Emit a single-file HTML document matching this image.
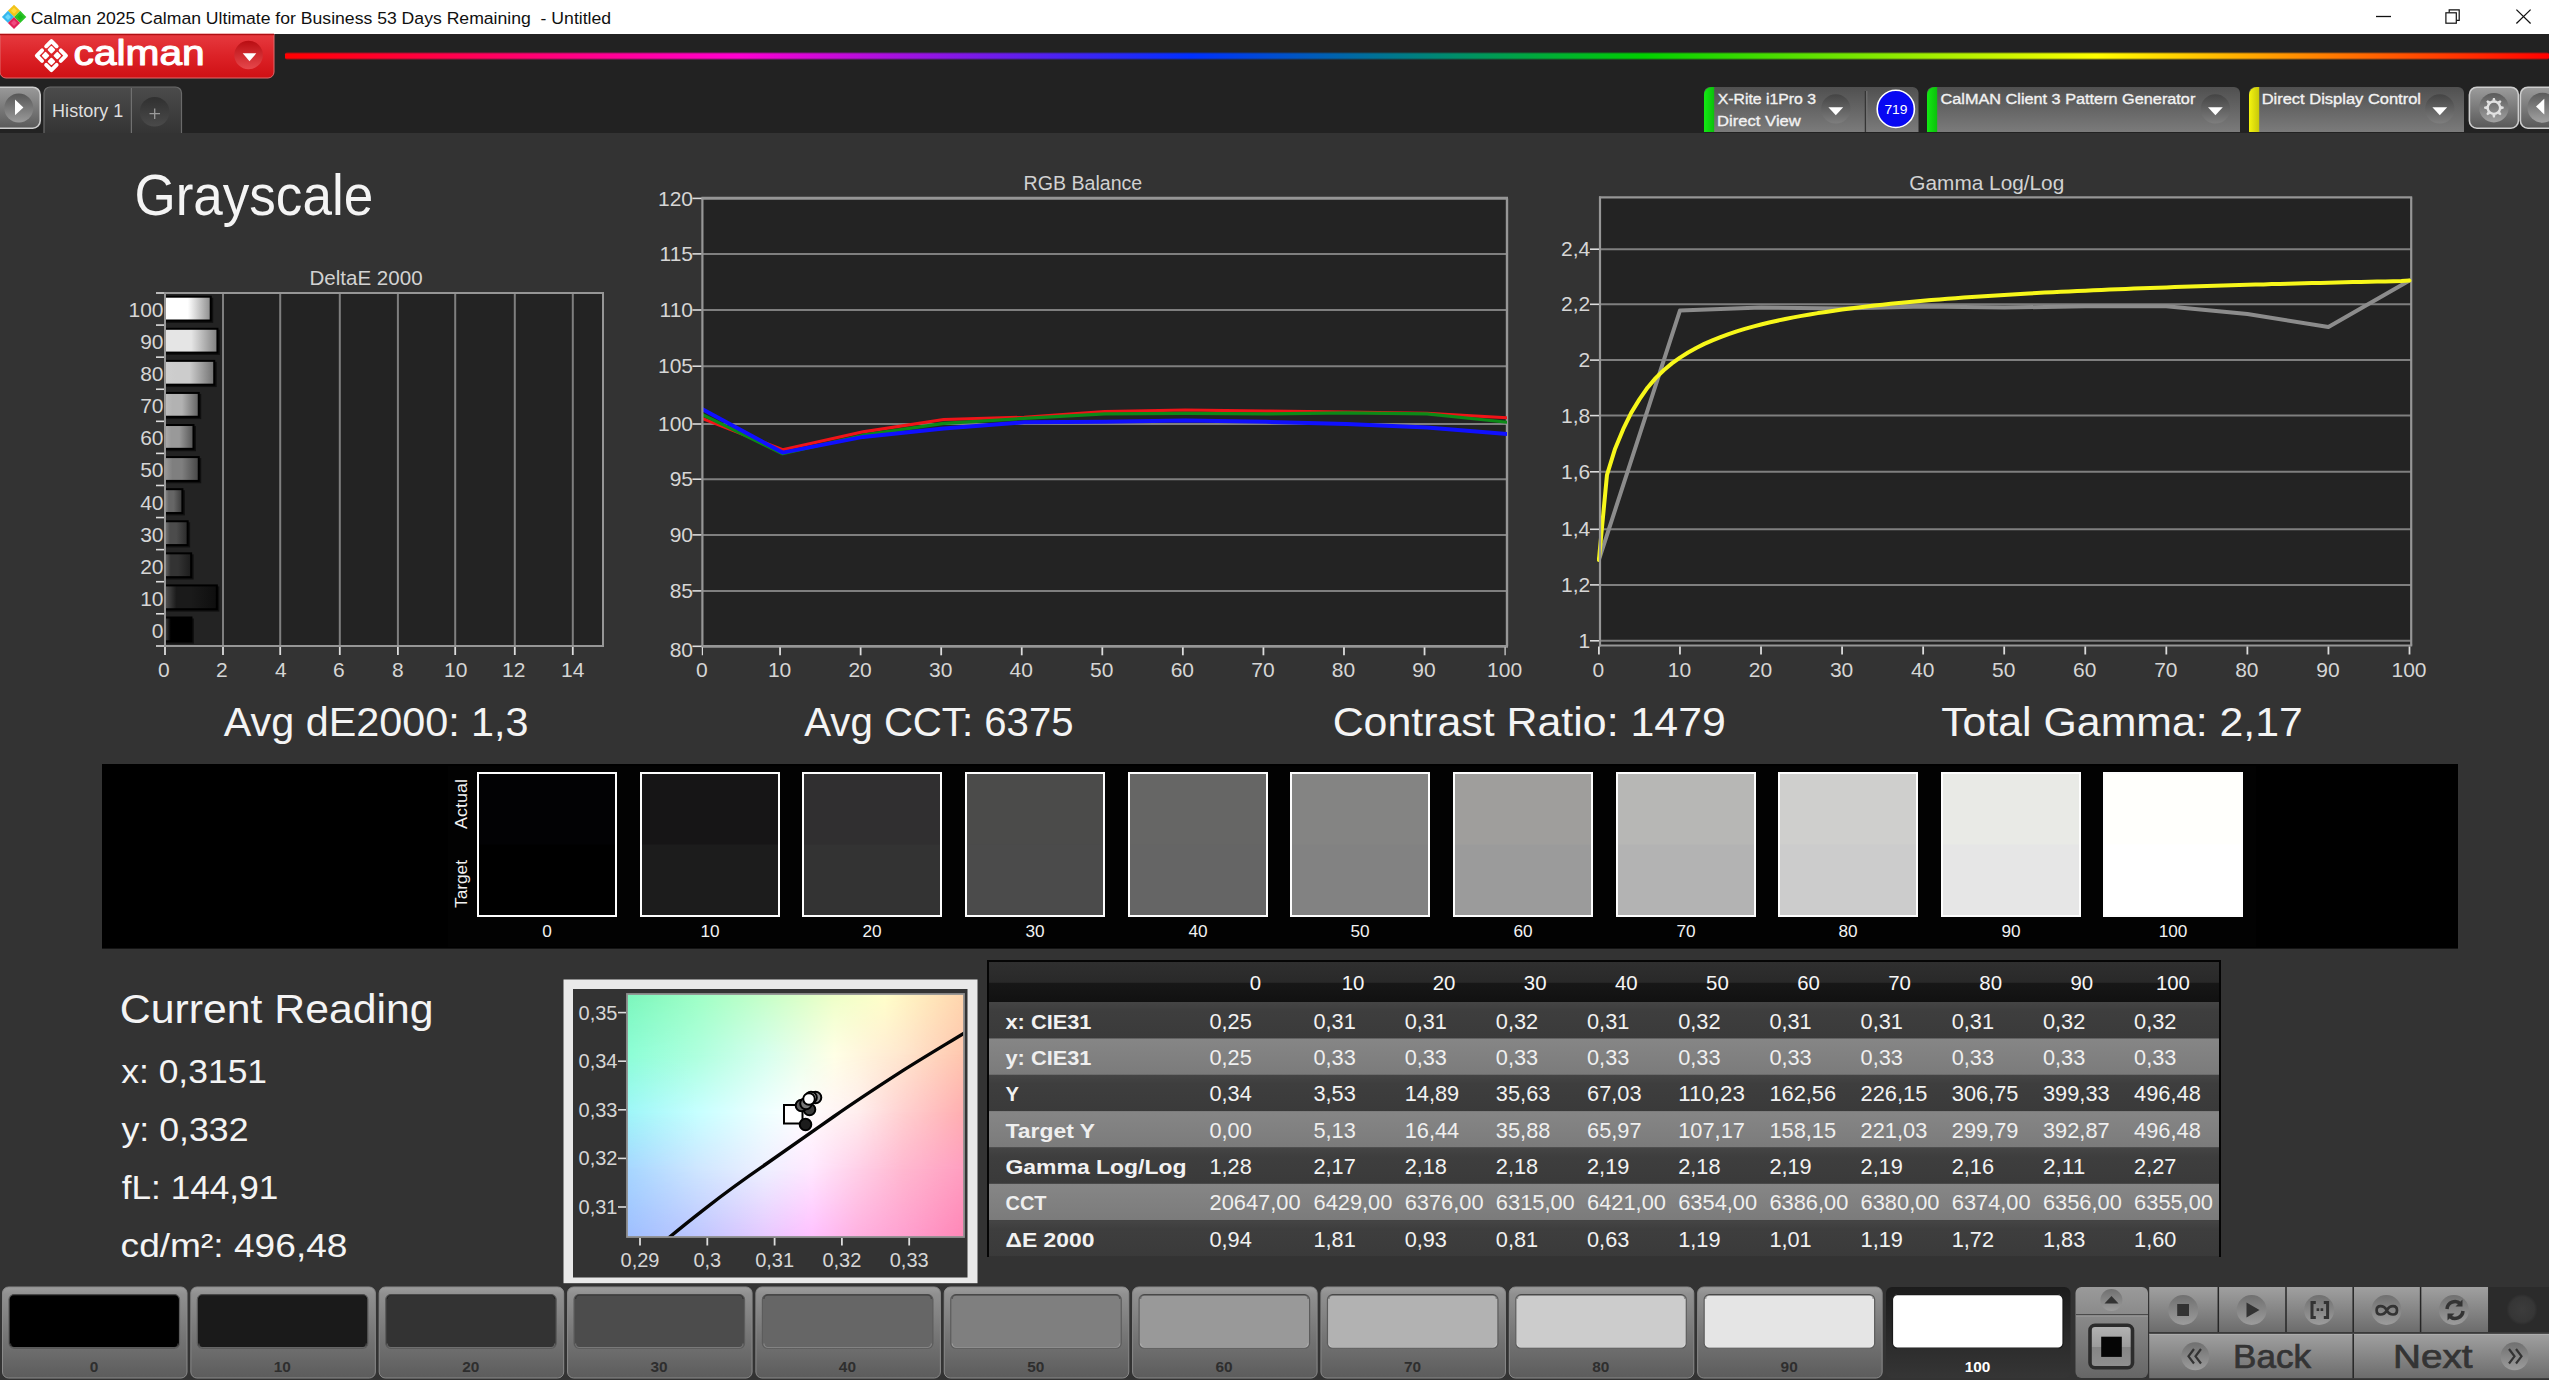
<!DOCTYPE html>
<html lang="en"><head><meta charset="utf-8"><title>Calman 2025 - Grayscale</title>
<style>html,body{margin:0;padding:0;background:#333;overflow:hidden}svg{display:block;font-family:'Liberation Sans', sans-serif}text{white-space:pre}</style></head>
<body>
<svg width="2549" height="1380" viewBox="0 0 2549 1380">
<defs>
<linearGradient id="rb" x1="0" y1="0" x2="1" y2="0"><stop offset="0" stop-color="#ff0000"/><stop offset="0.2" stop-color="#ff00d0"/><stop offset="0.4" stop-color="#0030ff"/><stop offset="0.6" stop-color="#00d000"/><stop offset="0.8" stop-color="#ffff00"/><stop offset="1" stop-color="#ff0000"/></linearGradient>
<linearGradient id="redb" x1="0" y1="0" x2="0" y2="1"><stop offset="0" stop-color="#e73a3f"/><stop offset="0.5" stop-color="#dc2227"/><stop offset="1" stop-color="#cf1014"/></linearGradient>
<linearGradient id="redc" x1="0" y1="0" x2="0" y2="1"><stop offset="0" stop-color="#b90d12"/><stop offset="1" stop-color="#e6484c"/></linearGradient>
<linearGradient id="pbtn" x1="0" y1="0" x2="0" y2="1"><stop offset="0" stop-color="#9a9a9a"/><stop offset="1" stop-color="#5a5a5a"/></linearGradient>
<linearGradient id="pcir" x1="0" y1="0" x2="0" y2="1"><stop offset="0" stop-color="#565656"/><stop offset="1" stop-color="#9a9a9a"/></linearGradient>
<linearGradient id="htab" x1="0" y1="0" x2="0" y2="1"><stop offset="0" stop-color="#4b4b4b"/><stop offset="1" stop-color="#343434"/></linearGradient>
<linearGradient id="plusc" x1="0" y1="0" x2="0" y2="1"><stop offset="0" stop-color="#303030"/><stop offset="1" stop-color="#4a4a4a"/></linearGradient>
<linearGradient id="dtab" x1="0" y1="0" x2="0" y2="1"><stop offset="0" stop-color="#505050"/><stop offset="1" stop-color="#7b7b7b"/></linearGradient>
<linearGradient id="ddc" x1="0" y1="0" x2="0" y2="1"><stop offset="0" stop-color="#444444"/><stop offset="1" stop-color="#7e7e7e"/></linearGradient>
<linearGradient id="bar1704" x1="0" y1="0" x2="1" y2="0"><stop offset="0" stop-color="#12ea12"/><stop offset="1" stop-color="#0cc00c"/></linearGradient>
<linearGradient id="bar1927" x1="0" y1="0" x2="1" y2="0"><stop offset="0" stop-color="#12ea12"/><stop offset="1" stop-color="#0cc00c"/></linearGradient>
<linearGradient id="bar2249" x1="0" y1="0" x2="1" y2="0"><stop offset="0" stop-color="#f4f410"/><stop offset="1" stop-color="#c8c80a"/></linearGradient>
<linearGradient id="gbtn" x1="0" y1="0" x2="0" y2="1"><stop offset="0" stop-color="#9c9c9c"/><stop offset="1" stop-color="#585858"/></linearGradient>
<linearGradient id="gcir" x1="0" y1="0" x2="0" y2="1"><stop offset="0" stop-color="#5a5a5a"/><stop offset="1" stop-color="#a2a2a2"/></linearGradient>
<linearGradient id="bar100" x1="0" y1="0" x2="1" y2="0"><stop offset="0" stop-color="#ffffff"/><stop offset="0.22" stop-color="#ffffff"/><stop offset="0.5" stop-color="#ffffff"/><stop offset="1" stop-color="#8c8c8c"/></linearGradient>
<linearGradient id="bar90" x1="0" y1="0" x2="1" y2="0"><stop offset="0" stop-color="#e5e5e5"/><stop offset="0.22" stop-color="#e5e5e5"/><stop offset="0.5" stop-color="#e5e5e5"/><stop offset="1" stop-color="#7e7e7e"/></linearGradient>
<linearGradient id="bar80" x1="0" y1="0" x2="1" y2="0"><stop offset="0" stop-color="#cfcfcf"/><stop offset="0.22" stop-color="#cccccc"/><stop offset="0.5" stop-color="#cccccc"/><stop offset="1" stop-color="#707070"/></linearGradient>
<linearGradient id="bar70" x1="0" y1="0" x2="1" y2="0"><stop offset="0" stop-color="#bdbdbd"/><stop offset="0.22" stop-color="#b2b2b2"/><stop offset="0.5" stop-color="#b2b2b2"/><stop offset="1" stop-color="#626262"/></linearGradient>
<linearGradient id="bar60" x1="0" y1="0" x2="1" y2="0"><stop offset="0" stop-color="#ababab"/><stop offset="0.22" stop-color="#999999"/><stop offset="0.5" stop-color="#999999"/><stop offset="1" stop-color="#545454"/></linearGradient>
<linearGradient id="bar50" x1="0" y1="0" x2="1" y2="0"><stop offset="0" stop-color="#999999"/><stop offset="0.22" stop-color="#7f7f7f"/><stop offset="0.5" stop-color="#7f7f7f"/><stop offset="1" stop-color="#464646"/></linearGradient>
<linearGradient id="bar40" x1="0" y1="0" x2="1" y2="0"><stop offset="0" stop-color="#878787"/><stop offset="0.22" stop-color="#666666"/><stop offset="0.5" stop-color="#666666"/><stop offset="1" stop-color="#383838"/></linearGradient>
<linearGradient id="bar30" x1="0" y1="0" x2="1" y2="0"><stop offset="0" stop-color="#757575"/><stop offset="0.22" stop-color="#4c4c4c"/><stop offset="0.5" stop-color="#4c4c4c"/><stop offset="1" stop-color="#2a2a2a"/></linearGradient>
<linearGradient id="bar20" x1="0" y1="0" x2="1" y2="0"><stop offset="0" stop-color="#646464"/><stop offset="0.22" stop-color="#333333"/><stop offset="0.5" stop-color="#333333"/><stop offset="1" stop-color="#1c1c1c"/></linearGradient>
<linearGradient id="bar10" x1="0" y1="0" x2="1" y2="0"><stop offset="0" stop-color="#525252"/><stop offset="0.22" stop-color="#1a1a1a"/><stop offset="0.5" stop-color="#1a1a1a"/><stop offset="1" stop-color="#0e0e0e"/></linearGradient>
<linearGradient id="bar0" x1="0" y1="0" x2="1" y2="0"><stop offset="0" stop-color="#404040"/><stop offset="0.22" stop-color="#000000"/><stop offset="0.5" stop-color="#000000"/><stop offset="1" stop-color="#000000"/></linearGradient>
<linearGradient id="cieR0" x1="0" y1="0" x2="1" y2="0"><stop offset="0" stop-color="#7cf6bc"/><stop offset="0.207" stop-color="#9effc6"/><stop offset="0.41" stop-color="#c6ffc8"/><stop offset="0.616" stop-color="#eeffc8"/><stop offset="0.765" stop-color="#ffffca"/><stop offset="1" stop-color="#ffd6ae"/></linearGradient>
<linearGradient id="cieR1" x1="0" y1="0" x2="1" y2="0"><stop offset="0" stop-color="#8cfed6"/><stop offset="0.207" stop-color="#aeffde"/><stop offset="0.41" stop-color="#d6ffee"/><stop offset="0.616" stop-color="#ffffe6"/><stop offset="0.82" stop-color="#ffe6ce"/><stop offset="1" stop-color="#ffc6ae"/></linearGradient>
<linearGradient id="cieM1" x1="0" y1="994" x2="0" y2="1054.75" gradientUnits="userSpaceOnUse"><stop offset="0" stop-color="#fff" stop-opacity="0"/><stop offset="1" stop-color="#fff" stop-opacity="1"/></linearGradient>
<linearGradient id="cieR2" x1="0" y1="0" x2="1" y2="0"><stop offset="0" stop-color="#9ef6f8"/><stop offset="0.207" stop-color="#c6ffff"/><stop offset="0.41" stop-color="#eeffff"/><stop offset="0.514" stop-color="#ffffff"/><stop offset="0.684" stop-color="#ffeeee"/><stop offset="0.82" stop-color="#ffd0d0"/><stop offset="1" stop-color="#ffaeb0"/></linearGradient>
<linearGradient id="cieM2" x1="0" y1="1054.75" x2="0" y2="1112.1" gradientUnits="userSpaceOnUse"><stop offset="0" stop-color="#fff" stop-opacity="0"/><stop offset="1" stop-color="#fff" stop-opacity="1"/></linearGradient>
<linearGradient id="cieR3" x1="0" y1="0" x2="1" y2="0"><stop offset="0" stop-color="#a6d6ff"/><stop offset="0.207" stop-color="#cee6ff"/><stop offset="0.41" stop-color="#eef0ff"/><stop offset="0.548" stop-color="#ffe8ff"/><stop offset="0.684" stop-color="#ffd0e8"/><stop offset="0.82" stop-color="#ffb8d0"/><stop offset="1" stop-color="#ff9ec0"/></linearGradient>
<linearGradient id="cieM3" x1="0" y1="1112.1" x2="0" y2="1168.96" gradientUnits="userSpaceOnUse"><stop offset="0" stop-color="#fff" stop-opacity="0"/><stop offset="1" stop-color="#fff" stop-opacity="1"/></linearGradient>
<linearGradient id="cieR4" x1="0" y1="0" x2="1" y2="0"><stop offset="0" stop-color="#9ebeff"/><stop offset="0.207" stop-color="#bec6ff"/><stop offset="0.41" stop-color="#e6c8ff"/><stop offset="0.548" stop-color="#ffc0ff"/><stop offset="0.684" stop-color="#ffb0e0"/><stop offset="0.82" stop-color="#ffa0d0"/><stop offset="1" stop-color="#ff86b6"/></linearGradient>
<linearGradient id="cieM4" x1="0" y1="1168.96" x2="0" y2="1237" gradientUnits="userSpaceOnUse"><stop offset="0" stop-color="#fff" stop-opacity="0"/><stop offset="1" stop-color="#fff" stop-opacity="1"/></linearGradient>
<linearGradient id="thead" x1="0" y1="0" x2="0" y2="1"><stop offset="0" stop-color="#2f2f2f"/><stop offset="0.51" stop-color="#292929"/><stop offset="0.52" stop-color="#171717"/><stop offset="1" stop-color="#111111"/></linearGradient>
<linearGradient id="rowd" x1="0" y1="0" x2="0" y2="1"><stop offset="0" stop-color="#454545"/><stop offset="0.25" stop-color="#3e3e3e"/><stop offset="1" stop-color="#3a3a3a"/></linearGradient>
<linearGradient id="rowl" x1="0" y1="0" x2="0" y2="1"><stop offset="0" stop-color="#868686"/><stop offset="1" stop-color="#7b7b7b"/></linearGradient>
<linearGradient id="lvb" x1="0" y1="0" x2="0" y2="1"><stop offset="0" stop-color="#9c9c9c"/><stop offset="0.08" stop-color="#909090"/><stop offset="0.5" stop-color="#787878"/><stop offset="1" stop-color="#5c5c5c"/></linearGradient>
<linearGradient id="lvsel" x1="0" y1="0" x2="0" y2="1"><stop offset="0" stop-color="#1c1c1c"/><stop offset="1" stop-color="#353535"/></linearGradient>
<linearGradient id="ctl" x1="0" y1="0" x2="0" y2="1"><stop offset="0" stop-color="#9a9a9a"/><stop offset="1" stop-color="#666666"/></linearGradient>
<linearGradient id="ctl2" x1="0" y1="0" x2="0" y2="1"><stop offset="0" stop-color="#a0a0a0"/><stop offset="1" stop-color="#6c6c6c"/></linearGradient>
<linearGradient id="cir" x1="0" y1="0" x2="0" y2="1"><stop offset="0" stop-color="#707070"/><stop offset="1" stop-color="#9c9c9c"/></linearGradient>
<linearGradient id="stp" x1="0" y1="0" x2="0" y2="1"><stop offset="0" stop-color="#b4b4b4"/><stop offset="0.5" stop-color="#9c9c9c"/><stop offset="0.5" stop-color="#858585"/><stop offset="1" stop-color="#909090"/></linearGradient>
<radialGradient id="dk" cx="0.5" cy="0.5" r="0.5"><stop offset="0" stop-color="#3c3c3c"/><stop offset="0.8" stop-color="#363636"/><stop offset="1" stop-color="#2b2b2b"/></radialGradient>
</defs>
<rect x="0" y="0" width="2549" height="1380" fill="#333333"/>
<rect x="0" y="34" width="2549" height="99" fill="#222222"/>
<rect x="0" y="0" width="2549" height="34" fill="#ffffff"/>
<path d="M14 4.7L20.1 10.8L14 16.9L7.9 10.8Z" fill="#f2c31a"/>
<path d="M8 10.8L14.1 16.9L8 23L1.9 16.9Z" fill="#35b8ee"/>
<path d="M20.2 10.8L26.3 16.9L20.2 23L14.1 16.9Z" fill="#2cc326"/>
<path d="M14 16.9L20.1 23L14 29.1L7.9 23Z" fill="#e0245a"/>
<path d="M14 7.8L17 10.8L14 13.8L11 10.8Z" fill="#ffd93a"/>
<path d="M8 13.9L11 16.9L8 19.9L5 16.9Z" fill="#6ad8fb"/>
<path d="M20.2 13.9L23.2 16.9L20.2 19.9L17.2 16.9Z" fill="#18b818"/>
<path d="M14 20L17 23L14 26L11 23Z" fill="#f04a80"/>
<text x="30.6453" y="23.7" font-size="17.4" fill="#101010" textLength="580.444" lengthAdjust="spacingAndGlyphs">Calman 2025 Calman Ultimate for Business 53 Days Remaining  - Untitled</text>
<line x1="2376" y1="16.5" x2="2391" y2="16.5" stroke="#111" stroke-width="1.3" />
<rect x="2445.9" y="12.8" width="10.4" height="10.4" fill="none" stroke="#111" stroke-width="1.2"/>
<path d="M2449.2 12.6V9.9H2459.2V20.3H2456.5" fill="none" stroke="#111" stroke-width="1.2"/>
<path d="M2516.4 9.6L2530.6 23.5M2530.6 9.6L2516.4 23.5" fill="none" stroke="#111" stroke-width="1.25"/>
<rect x="285" y="52.5" width="2264" height="7" fill="url(#rb)" rx="2" opacity="0.55"/>
<rect x="285" y="53.5" width="2264" height="5" fill="url(#rb)" rx="1"/>
<path d="M0 34H274V72a6 6 0 0 1-6 6H6a6 6 0 0 1-6-6Z" fill="url(#redb)" stroke="#e06a6c" stroke-width="1"/>
<rect x="0" y="34" width="274" height="1.2" fill="#b01014"/>
<g transform="translate(51.4 55.6) rotate(45)">
<path d="M2.9 10.3L10.3 10.3L10.3 2.9M2.9 -10.3L10.3 -10.3L10.3 -2.9M-2.9 10.3L-10.3 10.3L-10.3 2.9M-2.9 -10.3L-10.3 -10.3L-10.3 -2.9" fill="none" stroke="#fff" stroke-width="3.9" stroke-linecap="round" stroke-linejoin="round"/>
<rect x="1.25" y="1.25" width="5.8" height="5.8" rx="1" fill="#fff"/>
<rect x="1.25" y="-7.05" width="5.8" height="5.8" rx="1" fill="#fff"/>
<rect x="-7.05" y="1.25" width="5.8" height="5.8" rx="1" fill="#fff"/>
<rect x="-7.05" y="-7.05" width="5.8" height="5.8" rx="1" fill="#fff"/>
</g>
<text x="73.5813" y="65.2" font-size="35.6" fill="#fff" textLength="131.121" lengthAdjust="spacingAndGlyphs" stroke="#fff" stroke-width="1.1" stroke-linejoin="round">calman</text>
<circle cx="248.6" cy="55" r="14.3" fill="url(#redc)"/>
<path d="M242.7 53.3H256.3L249.5 61.2Z" fill="#fff"/>
<rect x="-8" y="87.2" width="48.2" height="41" fill="url(#pbtn)" rx="7.5" stroke="#cdcdcd" stroke-width="1.6"/>
<circle cx="18.8" cy="108" r="14.5" fill="url(#pcir)"/>
<path d="M15 99.6L23.4 107.4L15 115.2Z" fill="#fff"/>
<path d="M44 133.5V93a6 6 0 0 1 6-6H175.5a6 6 0 0 1 6 6V133.5Z" fill="url(#htab)" stroke="#6a6a6a" stroke-width="1.2"/>
<line x1="131.4" y1="88" x2="131.4" y2="133" stroke="#707070" stroke-width="1.2" />
<text x="52.1127" y="116.8" font-size="17.6" fill="#dedede" textLength="71.108" lengthAdjust="spacingAndGlyphs">History 1</text>
<circle cx="154.6" cy="111.8" r="14.8" fill="url(#plusc)"/>
<path d="M149.5 113.6H160M154.7 108.4V118.9" fill="none" stroke="#9a9a9a" stroke-width="1.3"/>
<rect x="0" y="133" width="2549" height="1" fill="#333333"/>
<path d="M1704 132V93a6 6 0 0 1 6-6H1912.5a6 6 0 0 1 6 6V132Z" fill="url(#dtab)"/>
<path d="M1704 132V95a8 8 0 0 1 8-8H1714.2V132Z" fill="url(#bar1704)"/>
<text x="1717.74" y="103.8" font-size="15.2" fill="#f2f2f2" textLength="98.195" lengthAdjust="spacingAndGlyphs" stroke="#f2f2f2" stroke-width="0.35">X-Rite i1Pro 3</text>
<text x="1717.14" y="125.6" font-size="15.2" fill="#f2f2f2" textLength="83.6784" lengthAdjust="spacingAndGlyphs" stroke="#f2f2f2" stroke-width="0.35">Direct View</text>
<circle cx="1835.8" cy="108.9" r="14.7" fill="url(#ddc)"/>
<path d="M1828.4 107.3H1843.2L1835.8 115.2Z" fill="#fff"/>
<line x1="1865.5" y1="91" x2="1865.5" y2="132" stroke="#353535" stroke-width="1.5" />
<line x1="1866.8" y1="91" x2="1866.8" y2="132" stroke="#7a7a7a" stroke-width="1" />
<circle cx="1895.8" cy="108.9" r="18.6" fill="#0808f2" stroke="#ffffff" stroke-width="1.6"/>
<text x="1884.44" y="113.8" font-size="12.2" fill="#fff" textLength="23.0577" lengthAdjust="spacingAndGlyphs">719</text>
<path d="M1927 132V93a6 6 0 0 1 6-6H2234a6 6 0 0 1 6 6V132Z" fill="url(#dtab)"/>
<path d="M1927 132V95a8 8 0 0 1 8-8H1937.2V132Z" fill="url(#bar1927)"/>
<text x="1940.5" y="103.8" font-size="15.2" fill="#f2f2f2" textLength="254.812" lengthAdjust="spacingAndGlyphs" stroke="#f2f2f2" stroke-width="0.35">CalMAN Client 3 Pattern Generator</text>
<circle cx="2215.4" cy="108.9" r="14.7" fill="url(#ddc)"/>
<path d="M2208 107.3H2222.8L2215.4 115.2Z" fill="#fff"/>
<path d="M2249 132V93a6 6 0 0 1 6-6H2458a6 6 0 0 1 6 6V132Z" fill="url(#dtab)"/>
<path d="M2249 132V95a8 8 0 0 1 8-8H2259.2V132Z" fill="url(#bar2249)"/>
<text x="2261.65" y="103.8" font-size="15.2" fill="#f2f2f2" textLength="159.377" lengthAdjust="spacingAndGlyphs" stroke="#f2f2f2" stroke-width="0.35">Direct Display Control</text>
<circle cx="2439.8" cy="108.9" r="14.7" fill="url(#ddc)"/>
<path d="M2432.4 107.3H2447.2L2439.8 115.2Z" fill="#fff"/>
<rect x="2469.4" y="87.2" width="49" height="41" fill="url(#gbtn)" rx="7.5" stroke="#cdcdcd" stroke-width="1.6"/>
<circle cx="2493.9" cy="107.7" r="14.7" fill="url(#gcir)"/>
<circle cx="2493.9" cy="107.7" r="6.2" fill="none" stroke="#e2e2e2" stroke-width="2.3"/>
<path d="M2492.20 114.60L2493.00 117.50L2494.80 117.50L2495.60 114.60Z" fill="#e2e2e2"/>
<path d="M2487.82 111.38L2486.33 113.99L2487.61 115.27L2490.22 113.78Z" fill="#e2e2e2"/>
<path d="M2487.00 106.00L2484.10 106.80L2484.10 108.60L2487.00 109.40Z" fill="#e2e2e2"/>
<path d="M2490.22 101.62L2487.61 100.13L2486.33 101.41L2487.82 104.02Z" fill="#e2e2e2"/>
<path d="M2495.60 100.80L2494.80 97.90L2493.00 97.90L2492.20 100.80Z" fill="#e2e2e2"/>
<path d="M2499.98 104.02L2501.47 101.41L2500.19 100.13L2497.58 101.62Z" fill="#e2e2e2"/>
<path d="M2500.80 109.40L2503.70 108.60L2503.70 106.80L2500.80 106.00Z" fill="#e2e2e2"/>
<path d="M2497.58 113.78L2500.19 115.27L2501.47 113.99L2499.98 111.38Z" fill="#e2e2e2"/>
<rect x="2520.4" y="87.2" width="49" height="41" fill="url(#gbtn)" rx="7.5" stroke="#cdcdcd" stroke-width="1.6"/>
<circle cx="2542.5" cy="107.7" r="15" fill="url(#gcir)"/>
<path d="M2544.3 98.8L2536 106.6L2544.3 114.5Z" fill="#fff"/>
<text x="134.441" y="215.3" font-size="57" fill="#f4f4f4" textLength="238.725" lengthAdjust="spacingAndGlyphs">Grayscale</text>
<text x="309.497" y="285.3" font-size="20.5" fill="#d2d2d2" textLength="113.091" lengthAdjust="spacingAndGlyphs">DeltaE 2000</text>
<rect x="165" y="293" width="438" height="353" fill="#232323"/>
<line x1="223" y1="293" x2="223" y2="646" stroke="#7f7f7f" stroke-width="2" />
<line x1="280.2" y1="293" x2="280.2" y2="646" stroke="#7f7f7f" stroke-width="2" />
<line x1="339.8" y1="293" x2="339.8" y2="646" stroke="#7f7f7f" stroke-width="2" />
<line x1="397.9" y1="293" x2="397.9" y2="646" stroke="#7f7f7f" stroke-width="2" />
<line x1="455.2" y1="293" x2="455.2" y2="646" stroke="#7f7f7f" stroke-width="2" />
<line x1="514.8" y1="293" x2="514.8" y2="646" stroke="#7f7f7f" stroke-width="2" />
<line x1="572.8" y1="293" x2="572.8" y2="646" stroke="#7f7f7f" stroke-width="2" />
<line x1="164" y1="293" x2="604" y2="293" stroke="#969696" stroke-width="2" />
<line x1="603" y1="293" x2="603" y2="646" stroke="#969696" stroke-width="2" />
<line x1="156" y1="293" x2="165" y2="293" stroke="#dcdcdc" stroke-width="1.6" />
<rect x="166" y="297.7" width="47.22" height="25.2" fill="#000" opacity="0.55"/>
<rect x="165" y="296.7" width="45.72" height="23.8" fill="url(#bar100)" stroke="#000" stroke-width="2"/>
<text x="163.5" y="317.04" font-size="21" fill="#d6d6d6" text-anchor="end">100</text>
<line x1="156" y1="325.08" x2="165" y2="325.08" stroke="#dcdcdc" stroke-width="1.6" />
<rect x="166" y="329.78" width="53.936" height="25.2" fill="#000" opacity="0.55"/>
<rect x="165" y="328.78" width="52.436" height="23.8" fill="url(#bar90)" stroke="#000" stroke-width="2"/>
<text x="163.5" y="349.12" font-size="21" fill="#d6d6d6" text-anchor="end">90</text>
<line x1="156" y1="357.16" x2="165" y2="357.16" stroke="#dcdcdc" stroke-width="1.6" />
<rect x="166" y="361.86" width="50.724" height="25.2" fill="#000" opacity="0.55"/>
<rect x="165" y="360.86" width="49.224" height="23.8" fill="url(#bar80)" stroke="#000" stroke-width="2"/>
<text x="163.5" y="381.2" font-size="21" fill="#d6d6d6" text-anchor="end">80</text>
<line x1="156" y1="389.24" x2="165" y2="389.24" stroke="#dcdcdc" stroke-width="1.6" />
<rect x="166" y="393.94" width="35.248" height="25.2" fill="#000" opacity="0.55"/>
<rect x="165" y="392.94" width="33.748" height="23.8" fill="url(#bar70)" stroke="#000" stroke-width="2"/>
<text x="163.5" y="413.28" font-size="21" fill="#d6d6d6" text-anchor="end">70</text>
<line x1="156" y1="421.32" x2="165" y2="421.32" stroke="#dcdcdc" stroke-width="1.6" />
<rect x="166" y="426.02" width="29.992" height="25.2" fill="#000" opacity="0.55"/>
<rect x="165" y="425.02" width="28.492" height="23.8" fill="url(#bar60)" stroke="#000" stroke-width="2"/>
<text x="163.5" y="445.36" font-size="21" fill="#d6d6d6" text-anchor="end">60</text>
<line x1="156" y1="453.4" x2="165" y2="453.4" stroke="#dcdcdc" stroke-width="1.6" />
<rect x="166" y="458.1" width="35.248" height="25.2" fill="#000" opacity="0.55"/>
<rect x="165" y="457.1" width="33.748" height="23.8" fill="url(#bar50)" stroke="#000" stroke-width="2"/>
<text x="163.5" y="477.44" font-size="21" fill="#d6d6d6" text-anchor="end">50</text>
<line x1="156" y1="485.48" x2="165" y2="485.48" stroke="#dcdcdc" stroke-width="1.6" />
<rect x="166" y="490.18" width="18.896" height="25.2" fill="#000" opacity="0.55"/>
<rect x="165" y="489.18" width="17.396" height="23.8" fill="url(#bar40)" stroke="#000" stroke-width="2"/>
<text x="163.5" y="509.52" font-size="21" fill="#d6d6d6" text-anchor="end">40</text>
<line x1="156" y1="517.56" x2="165" y2="517.56" stroke="#dcdcdc" stroke-width="1.6" />
<rect x="166" y="522.26" width="24.152" height="25.2" fill="#000" opacity="0.55"/>
<rect x="165" y="521.26" width="22.652" height="23.8" fill="url(#bar30)" stroke="#000" stroke-width="2"/>
<text x="163.5" y="541.6" font-size="21" fill="#d6d6d6" text-anchor="end">30</text>
<line x1="156" y1="549.64" x2="165" y2="549.64" stroke="#dcdcdc" stroke-width="1.6" />
<rect x="166" y="554.34" width="27.656" height="25.2" fill="#000" opacity="0.55"/>
<rect x="165" y="553.34" width="26.156" height="23.8" fill="url(#bar20)" stroke="#000" stroke-width="2"/>
<text x="163.5" y="573.68" font-size="21" fill="#d6d6d6" text-anchor="end">20</text>
<line x1="156" y1="581.72" x2="165" y2="581.72" stroke="#dcdcdc" stroke-width="1.6" />
<rect x="166" y="586.42" width="53.352" height="25.2" fill="#000" opacity="0.55"/>
<rect x="165" y="585.42" width="51.852" height="23.8" fill="url(#bar10)" stroke="#000" stroke-width="2"/>
<text x="163.5" y="605.76" font-size="21" fill="#d6d6d6" text-anchor="end">10</text>
<line x1="156" y1="613.8" x2="165" y2="613.8" stroke="#dcdcdc" stroke-width="1.6" />
<rect x="166" y="618.5" width="27.948" height="25.2" fill="#000" opacity="0.55"/>
<rect x="165" y="617.5" width="26.448" height="23.8" fill="url(#bar0)" stroke="#000" stroke-width="2"/>
<text x="163.5" y="637.84" font-size="21" fill="#d6d6d6" text-anchor="end">0</text>
<line x1="156" y1="646" x2="165" y2="646" stroke="#dcdcdc" stroke-width="1.6" />
<line x1="165" y1="292" x2="165" y2="647" stroke="#969696" stroke-width="2" />
<line x1="164" y1="646" x2="604" y2="646" stroke="#969696" stroke-width="2" />
<line x1="165" y1="647" x2="165" y2="655" stroke="#dcdcdc" stroke-width="1.8" />
<text x="163.8" y="676.6" font-size="21" fill="#d6d6d6" text-anchor="middle">0</text>
<line x1="223" y1="647" x2="223" y2="655" stroke="#dcdcdc" stroke-width="1.8" />
<text x="221.8" y="676.6" font-size="21" fill="#d6d6d6" text-anchor="middle">2</text>
<line x1="280.2" y1="647" x2="280.2" y2="655" stroke="#dcdcdc" stroke-width="1.8" />
<text x="280.8" y="676.6" font-size="21" fill="#d6d6d6" text-anchor="middle">4</text>
<line x1="339.8" y1="647" x2="339.8" y2="655" stroke="#dcdcdc" stroke-width="1.8" />
<text x="338.8" y="676.6" font-size="21" fill="#d6d6d6" text-anchor="middle">6</text>
<line x1="397.9" y1="647" x2="397.9" y2="655" stroke="#dcdcdc" stroke-width="1.8" />
<text x="397.8" y="676.6" font-size="21" fill="#d6d6d6" text-anchor="middle">8</text>
<line x1="455.2" y1="647" x2="455.2" y2="655" stroke="#dcdcdc" stroke-width="1.8" />
<text x="455.8" y="676.6" font-size="21" fill="#d6d6d6" text-anchor="middle">10</text>
<line x1="514.8" y1="647" x2="514.8" y2="655" stroke="#dcdcdc" stroke-width="1.8" />
<text x="513.8" y="676.6" font-size="21" fill="#d6d6d6" text-anchor="middle">12</text>
<line x1="572.8" y1="647" x2="572.8" y2="655" stroke="#dcdcdc" stroke-width="1.8" />
<text x="572.8" y="676.6" font-size="21" fill="#d6d6d6" text-anchor="middle">14</text>
<text x="1023.57" y="189.7" font-size="20.5" fill="#d2d2d2" textLength="118.643" lengthAdjust="spacingAndGlyphs">RGB Balance</text>
<rect x="702.4" y="198.4" width="804.6" height="447.9" fill="#232323"/>
<line x1="702.4" y1="590.9" x2="1507" y2="590.9" stroke="#7f7f7f" stroke-width="2" />
<line x1="702.4" y1="534.9" x2="1507" y2="534.9" stroke="#7f7f7f" stroke-width="2" />
<line x1="702.4" y1="479.2" x2="1507" y2="479.2" stroke="#7f7f7f" stroke-width="2" />
<line x1="702.4" y1="424" x2="1507" y2="424" stroke="#7f7f7f" stroke-width="2" />
<line x1="702.4" y1="366.2" x2="1507" y2="366.2" stroke="#7f7f7f" stroke-width="2" />
<line x1="702.4" y1="310" x2="1507" y2="310" stroke="#7f7f7f" stroke-width="2" />
<line x1="702.4" y1="253.9" x2="1507" y2="253.9" stroke="#7f7f7f" stroke-width="2" />
<line x1="701.4" y1="198.2" x2="1508" y2="198.2" stroke="#969696" stroke-width="3" />
<line x1="1507" y1="198.4" x2="1507" y2="646.3" stroke="#969696" stroke-width="2.4" />
<clipPath id="rgbclip"><rect x="702.4" y="198.4" width="804.6" height="447.9"/></clipPath>
<g clip-path="url(#rgbclip)" fill="none" stroke-linejoin="round">
<polyline points="702.0,418.4 782.6,449.8 863.1,431.8 943.7,419.5 1024.2,417.3 1104.8,411.7 1185.4,410.0 1265.9,411.1 1346.5,412.2 1427.0,413.4 1507.6,417.8" stroke="#f01418" stroke-width="3.2"/>
<polyline points="702.0,414.5 782.6,453.7 863.1,435.2 943.7,423.4 1024.2,418.4 1104.8,413.9 1185.4,413.4 1265.9,413.9 1346.5,412.8 1427.0,413.9 1507.6,422.3" stroke="#0c8a18" stroke-width="3.2"/>
<polyline points="702.0,408.9 782.6,452.6 863.1,436.9 943.7,428.5 1024.2,422.3 1104.8,421.8 1185.4,420.6 1265.9,421.8 1346.5,424.0 1427.0,427.4 1507.6,434.1" stroke="#1010ff" stroke-width="4"/>
</g>
<line x1="702.4" y1="197.4" x2="702.4" y2="647.3" stroke="#969696" stroke-width="2.2" />
<line x1="701.4" y1="646.3" x2="1508" y2="646.3" stroke="#969696" stroke-width="2.8" />
<line x1="692.4" y1="646.3" x2="701.4" y2="646.3" stroke="#dcdcdc" stroke-width="1.6" />
<text x="693" y="657" font-size="21" fill="#d6d6d6" text-anchor="end">80</text>
<line x1="692.4" y1="590.9" x2="701.4" y2="590.9" stroke="#dcdcdc" stroke-width="1.6" />
<text x="693" y="598.1" font-size="21" fill="#d6d6d6" text-anchor="end">85</text>
<line x1="692.4" y1="534.9" x2="701.4" y2="534.9" stroke="#dcdcdc" stroke-width="1.6" />
<text x="693" y="542.1" font-size="21" fill="#d6d6d6" text-anchor="end">90</text>
<line x1="692.4" y1="479.2" x2="701.4" y2="479.2" stroke="#dcdcdc" stroke-width="1.6" />
<text x="693" y="486.4" font-size="21" fill="#d6d6d6" text-anchor="end">95</text>
<line x1="692.4" y1="424" x2="701.4" y2="424" stroke="#dcdcdc" stroke-width="1.6" />
<text x="693" y="431.2" font-size="21" fill="#d6d6d6" text-anchor="end">100</text>
<line x1="692.4" y1="366.2" x2="701.4" y2="366.2" stroke="#dcdcdc" stroke-width="1.6" />
<text x="693" y="373.4" font-size="21" fill="#d6d6d6" text-anchor="end">105</text>
<line x1="692.4" y1="310" x2="701.4" y2="310" stroke="#dcdcdc" stroke-width="1.6" />
<text x="693" y="317.2" font-size="21" fill="#d6d6d6" text-anchor="end">110</text>
<line x1="692.4" y1="253.9" x2="701.4" y2="253.9" stroke="#dcdcdc" stroke-width="1.6" />
<text x="693" y="261.1" font-size="21" fill="#d6d6d6" text-anchor="end">115</text>
<line x1="692.4" y1="198.4" x2="701.4" y2="198.4" stroke="#dcdcdc" stroke-width="1.6" />
<text x="693" y="205.6" font-size="21" fill="#d6d6d6" text-anchor="end">120</text>
<line x1="702.4" y1="647.3" x2="702.4" y2="655.3" stroke="#dcdcdc" stroke-width="1.2" />
<text x="701.9" y="677.4" font-size="21" fill="#d6d6d6" text-anchor="middle">0</text>
<line x1="780.06" y1="647.3" x2="780.06" y2="655.3" stroke="#dcdcdc" stroke-width="1.8" />
<text x="779.56" y="677.4" font-size="21" fill="#d6d6d6" text-anchor="middle">10</text>
<line x1="860.62" y1="647.3" x2="860.62" y2="655.3" stroke="#dcdcdc" stroke-width="1.8" />
<text x="860.12" y="677.4" font-size="21" fill="#d6d6d6" text-anchor="middle">20</text>
<line x1="941.18" y1="647.3" x2="941.18" y2="655.3" stroke="#dcdcdc" stroke-width="1.8" />
<text x="940.68" y="677.4" font-size="21" fill="#d6d6d6" text-anchor="middle">30</text>
<line x1="1021.74" y1="647.3" x2="1021.74" y2="655.3" stroke="#dcdcdc" stroke-width="1.8" />
<text x="1021.24" y="677.4" font-size="21" fill="#d6d6d6" text-anchor="middle">40</text>
<line x1="1102.3" y1="647.3" x2="1102.3" y2="655.3" stroke="#dcdcdc" stroke-width="1.8" />
<text x="1101.8" y="677.4" font-size="21" fill="#d6d6d6" text-anchor="middle">50</text>
<line x1="1182.86" y1="647.3" x2="1182.86" y2="655.3" stroke="#dcdcdc" stroke-width="1.8" />
<text x="1182.36" y="677.4" font-size="21" fill="#d6d6d6" text-anchor="middle">60</text>
<line x1="1263.42" y1="647.3" x2="1263.42" y2="655.3" stroke="#dcdcdc" stroke-width="1.8" />
<text x="1262.92" y="677.4" font-size="21" fill="#d6d6d6" text-anchor="middle">70</text>
<line x1="1343.98" y1="647.3" x2="1343.98" y2="655.3" stroke="#dcdcdc" stroke-width="1.8" />
<text x="1343.48" y="677.4" font-size="21" fill="#d6d6d6" text-anchor="middle">80</text>
<line x1="1424.54" y1="647.3" x2="1424.54" y2="655.3" stroke="#dcdcdc" stroke-width="1.8" />
<text x="1424.04" y="677.4" font-size="21" fill="#d6d6d6" text-anchor="middle">90</text>
<line x1="1505.1" y1="647.3" x2="1505.1" y2="655.3" stroke="#dcdcdc" stroke-width="1.2" />
<text x="1504.6" y="677.4" font-size="21" fill="#d6d6d6" text-anchor="middle">100</text>
<text x="1909.39" y="189.7" font-size="20.5" fill="#d2d2d2" textLength="154.842" lengthAdjust="spacingAndGlyphs">Gamma Log/Log</text>
<rect x="1600" y="197.4" width="811.2" height="448.1" fill="#232323"/>
<line x1="1600" y1="640.8" x2="2411.2" y2="640.8" stroke="#7f7f7f" stroke-width="2" />
<line x1="1600" y1="584.9" x2="2411.2" y2="584.9" stroke="#7f7f7f" stroke-width="2" />
<line x1="1600" y1="529.3" x2="2411.2" y2="529.3" stroke="#7f7f7f" stroke-width="2" />
<line x1="1600" y1="471.8" x2="2411.2" y2="471.8" stroke="#7f7f7f" stroke-width="2" />
<line x1="1600" y1="415.6" x2="2411.2" y2="415.6" stroke="#7f7f7f" stroke-width="2" />
<line x1="1600" y1="360.1" x2="2411.2" y2="360.1" stroke="#7f7f7f" stroke-width="2" />
<line x1="1600" y1="304.3" x2="2411.2" y2="304.3" stroke="#7f7f7f" stroke-width="2" />
<line x1="1600" y1="249.2" x2="2411.2" y2="249.2" stroke="#7f7f7f" stroke-width="2" />
<line x1="1599" y1="197.4" x2="2412.2" y2="197.4" stroke="#969696" stroke-width="2.2" />
<line x1="2411.2" y1="197.4" x2="2411.2" y2="645.5" stroke="#969696" stroke-width="2.2" />
<clipPath id="gclip"><rect x="1597" y="197.4" width="817.1999999999998" height="448.1"/></clipPath>
<g clip-path="url(#gclip)" fill="none" stroke-linejoin="round" stroke-linecap="round">
<polyline points="1598.9,559.9 1680.0,310.4 1761.0,307.6 1842.1,308.5 1923.1,306.5 2004.2,307.6 2085.3,306.3 2166.3,306.3 2247.4,314.1 2328.4,327.0 2409.5,280.6" stroke="#8c8c8c" stroke-width="4"/>
<polyline points="1598.9,559.9 1607.0,474.8 1615.1,448.7 1623.2,429.2 1631.3,412.6 1639.4,399.4 1647.5,387.7 1655.6,378.1 1663.7,370.2 1671.9,363.4 1680.0,357.6 1688.1,352.5 1696.2,348.0 1704.3,343.9 1712.4,340.3 1720.5,337.1 1728.6,334.1 1736.7,331.4 1744.8,328.9 1752.9,326.6 1761.0,324.5 1769.1,322.5 1777.2,320.7 1785.3,319.0 1793.4,317.4 1801.6,315.9 1809.7,314.5 1817.8,313.1 1825.9,311.9 1834.0,310.7 1842.1,309.6 1850.2,308.5 1858.3,307.5 1866.4,306.5 1874.5,305.5 1882.6,304.7 1890.7,303.8 1898.8,303.0 1906.9,302.2 1915.0,301.5 1923.1,300.8 1931.2,300.1 1939.4,299.4 1947.5,298.8 1955.6,298.2 1963.7,297.6 1971.8,297.0 1979.9,296.5 1988.0,295.9 1996.1,295.4 2004.2,294.9 2012.3,294.4 2020.4,294.0 2028.5,293.5 2036.6,293.1 2044.7,292.6 2052.8,292.2 2060.9,291.8 2069.0,291.4 2077.2,291.0 2085.3,290.7 2093.4,290.3 2101.5,289.9 2109.6,289.6 2117.7,289.3 2125.8,288.9 2133.9,288.6 2142.0,288.3 2150.1,288.0 2158.2,287.7 2166.3,287.4 2174.4,287.1 2182.5,286.8 2190.6,286.6 2198.7,286.3 2206.9,286.0 2215.0,285.8 2223.1,285.5 2231.2,285.3 2239.3,285.0 2247.4,284.8 2255.5,284.6 2263.6,284.4 2271.7,284.1 2279.8,283.9 2287.9,283.7 2296.0,283.5 2304.1,283.3 2312.2,283.1 2320.3,282.9 2328.4,282.7 2336.5,282.5 2344.7,282.3 2352.8,282.1 2360.9,281.9 2369.0,281.8 2377.1,281.6 2385.2,281.4 2393.3,281.2 2401.4,281.1 2409.5,280.6" stroke="#f7f71a" stroke-width="4"/>
</g>
<line x1="1600" y1="196.4" x2="1600" y2="646.5" stroke="#969696" stroke-width="2.2" />
<line x1="1599" y1="645.5" x2="2412.2" y2="645.5" stroke="#969696" stroke-width="2.2" />
<line x1="1590" y1="640.8" x2="1599" y2="640.8" stroke="#dcdcdc" stroke-width="1.6" />
<text x="1590.2" y="647.7" font-size="21" fill="#d6d6d6" text-anchor="end">1</text>
<line x1="1590" y1="584.9" x2="1599" y2="584.9" stroke="#dcdcdc" stroke-width="1.6" />
<text x="1590.2" y="591.8" font-size="21" fill="#d6d6d6" text-anchor="end">1,2</text>
<line x1="1590" y1="529.3" x2="1599" y2="529.3" stroke="#dcdcdc" stroke-width="1.6" />
<text x="1590.2" y="536.2" font-size="21" fill="#d6d6d6" text-anchor="end">1,4</text>
<line x1="1590" y1="471.8" x2="1599" y2="471.8" stroke="#dcdcdc" stroke-width="1.6" />
<text x="1590.2" y="478.7" font-size="21" fill="#d6d6d6" text-anchor="end">1,6</text>
<line x1="1590" y1="415.6" x2="1599" y2="415.6" stroke="#dcdcdc" stroke-width="1.6" />
<text x="1590.2" y="422.5" font-size="21" fill="#d6d6d6" text-anchor="end">1,8</text>
<line x1="1590" y1="360.1" x2="1599" y2="360.1" stroke="#dcdcdc" stroke-width="1.6" />
<text x="1590.2" y="367" font-size="21" fill="#d6d6d6" text-anchor="end">2</text>
<line x1="1590" y1="304.3" x2="1599" y2="304.3" stroke="#dcdcdc" stroke-width="1.6" />
<text x="1590.2" y="311.2" font-size="21" fill="#d6d6d6" text-anchor="end">2,2</text>
<line x1="1590" y1="249.2" x2="1599" y2="249.2" stroke="#dcdcdc" stroke-width="1.6" />
<text x="1590.2" y="256.1" font-size="21" fill="#d6d6d6" text-anchor="end">2,4</text>
<line x1="1598.9" y1="646.5" x2="1598.9" y2="654.5" stroke="#dcdcdc" stroke-width="1.8" />
<text x="1598.4" y="677.4" font-size="21" fill="#d6d6d6" text-anchor="middle">0</text>
<line x1="1679.96" y1="646.5" x2="1679.96" y2="654.5" stroke="#dcdcdc" stroke-width="1.8" />
<text x="1679.46" y="677.4" font-size="21" fill="#d6d6d6" text-anchor="middle">10</text>
<line x1="1761.02" y1="646.5" x2="1761.02" y2="654.5" stroke="#dcdcdc" stroke-width="1.8" />
<text x="1760.52" y="677.4" font-size="21" fill="#d6d6d6" text-anchor="middle">20</text>
<line x1="1842.08" y1="646.5" x2="1842.08" y2="654.5" stroke="#dcdcdc" stroke-width="1.8" />
<text x="1841.58" y="677.4" font-size="21" fill="#d6d6d6" text-anchor="middle">30</text>
<line x1="1923.14" y1="646.5" x2="1923.14" y2="654.5" stroke="#dcdcdc" stroke-width="1.8" />
<text x="1922.64" y="677.4" font-size="21" fill="#d6d6d6" text-anchor="middle">40</text>
<line x1="2004.2" y1="646.5" x2="2004.2" y2="654.5" stroke="#dcdcdc" stroke-width="1.8" />
<text x="2003.7" y="677.4" font-size="21" fill="#d6d6d6" text-anchor="middle">50</text>
<line x1="2085.26" y1="646.5" x2="2085.26" y2="654.5" stroke="#dcdcdc" stroke-width="1.8" />
<text x="2084.76" y="677.4" font-size="21" fill="#d6d6d6" text-anchor="middle">60</text>
<line x1="2166.32" y1="646.5" x2="2166.32" y2="654.5" stroke="#dcdcdc" stroke-width="1.8" />
<text x="2165.82" y="677.4" font-size="21" fill="#d6d6d6" text-anchor="middle">70</text>
<line x1="2247.38" y1="646.5" x2="2247.38" y2="654.5" stroke="#dcdcdc" stroke-width="1.8" />
<text x="2246.88" y="677.4" font-size="21" fill="#d6d6d6" text-anchor="middle">80</text>
<line x1="2328.44" y1="646.5" x2="2328.44" y2="654.5" stroke="#dcdcdc" stroke-width="1.8" />
<text x="2327.94" y="677.4" font-size="21" fill="#d6d6d6" text-anchor="middle">90</text>
<line x1="2409.5" y1="646.5" x2="2409.5" y2="654.5" stroke="#dcdcdc" stroke-width="1.8" />
<text x="2409" y="677.4" font-size="21" fill="#d6d6d6" text-anchor="middle">100</text>
<text x="223.8" y="735.6" font-size="40.3" fill="#f4f4f4" textLength="304.716" lengthAdjust="spacingAndGlyphs">Avg dE2000: 1,3</text>
<text x="804.3" y="735.6" font-size="40.3" fill="#f4f4f4" textLength="269.233" lengthAdjust="spacingAndGlyphs">Avg CCT: 6375</text>
<text x="1332.67" y="735.6" font-size="40.3" fill="#f4f4f4" textLength="393.189" lengthAdjust="spacingAndGlyphs">Contrast Ratio: 1479</text>
<text x="1941.2" y="735.6" font-size="40.3" fill="#f4f4f4" textLength="361.717" lengthAdjust="spacingAndGlyphs">Total Gamma: 2,17</text>
<rect x="102" y="764" width="2356" height="184.6" fill="#000000"/>
<rect x="448" y="766" width="1808" height="181" fill="#020202"/>
<rect x="477" y="772" width="140" height="144.5" fill="#020204"/>
<rect x="477" y="844.5" width="140" height="72" fill="#000000"/>
<rect x="478" y="773" width="138" height="143" fill="none" stroke="#fdfdfd" stroke-width="2"/>
<text x="547" y="937.3" font-size="17.2" fill="#f2f2f2" text-anchor="middle">0</text>
<rect x="640" y="772" width="140" height="144.5" fill="#161516"/>
<rect x="640" y="844.5" width="140" height="72" fill="#1c1c1c"/>
<rect x="641" y="773" width="138" height="143" fill="none" stroke="#fdfdfd" stroke-width="2"/>
<text x="710" y="937.3" font-size="17.2" fill="#f2f2f2" text-anchor="middle">10</text>
<rect x="802" y="772" width="140" height="144.5" fill="#302f30"/>
<rect x="802" y="844.5" width="140" height="72" fill="#333333"/>
<rect x="803" y="773" width="138" height="143" fill="none" stroke="#fdfdfd" stroke-width="2"/>
<text x="872" y="937.3" font-size="17.2" fill="#f2f2f2" text-anchor="middle">20</text>
<rect x="965" y="772" width="140" height="144.5" fill="#4b4b4a"/>
<rect x="965" y="844.5" width="140" height="72" fill="#4b4b4b"/>
<rect x="966" y="773" width="138" height="143" fill="none" stroke="#fdfdfd" stroke-width="2"/>
<text x="1035" y="937.3" font-size="17.2" fill="#f2f2f2" text-anchor="middle">30</text>
<rect x="1128" y="772" width="140" height="144.5" fill="#666665"/>
<rect x="1128" y="844.5" width="140" height="72" fill="#656565"/>
<rect x="1129" y="773" width="138" height="143" fill="none" stroke="#fdfdfd" stroke-width="2"/>
<text x="1198" y="937.3" font-size="17.2" fill="#f2f2f2" text-anchor="middle">40</text>
<rect x="1290" y="772" width="140" height="144.5" fill="#848483"/>
<rect x="1290" y="844.5" width="140" height="72" fill="#828282"/>
<rect x="1291" y="773" width="138" height="143" fill="none" stroke="#fdfdfd" stroke-width="2"/>
<text x="1360" y="937.3" font-size="17.2" fill="#f2f2f2" text-anchor="middle">50</text>
<rect x="1453" y="772" width="140" height="144.5" fill="#9f9e9c"/>
<rect x="1453" y="844.5" width="140" height="72" fill="#9b9b9b"/>
<rect x="1454" y="773" width="138" height="143" fill="none" stroke="#fdfdfd" stroke-width="2"/>
<text x="1523" y="937.3" font-size="17.2" fill="#f2f2f2" text-anchor="middle">60</text>
<rect x="1616" y="772" width="140" height="144.5" fill="#b7b7b5"/>
<rect x="1616" y="844.5" width="140" height="72" fill="#b3b3b3"/>
<rect x="1617" y="773" width="138" height="143" fill="none" stroke="#fdfdfd" stroke-width="2"/>
<text x="1686" y="937.3" font-size="17.2" fill="#f2f2f2" text-anchor="middle">70</text>
<rect x="1778" y="772" width="140" height="144.5" fill="#cfcfcd"/>
<rect x="1778" y="844.5" width="140" height="72" fill="#cccccc"/>
<rect x="1779" y="773" width="138" height="143" fill="none" stroke="#fdfdfd" stroke-width="2"/>
<text x="1848" y="937.3" font-size="17.2" fill="#f2f2f2" text-anchor="middle">80</text>
<rect x="1941" y="772" width="140" height="144.5" fill="#e9eae6"/>
<rect x="1941" y="844.5" width="140" height="72" fill="#e6e6e6"/>
<rect x="1942" y="773" width="138" height="143" fill="none" stroke="#fdfdfd" stroke-width="2"/>
<text x="2011" y="937.3" font-size="17.2" fill="#f2f2f2" text-anchor="middle">90</text>
<rect x="2103" y="772" width="140" height="144.5" fill="#fffffc"/>
<rect x="2103" y="844.5" width="140" height="72" fill="#ffffff"/>
<rect x="2104" y="773" width="138" height="143" fill="none" stroke="#fdfdfd" stroke-width="2"/>
<text x="2173" y="937.3" font-size="17.2" fill="#f2f2f2" text-anchor="middle">100</text>
<text transform="translate(466.5 829) rotate(-90)" font-size="17.2" fill="#f2f2f2" textLength="50" lengthAdjust="spacingAndGlyphs">Actual</text>
<text transform="translate(466.5 908) rotate(-90)" font-size="17.2" fill="#f2f2f2" textLength="48" lengthAdjust="spacingAndGlyphs">Target</text>
<text x="119.876" y="1023.4" font-size="40.2" fill="#f4f4f4" textLength="313.608" lengthAdjust="spacingAndGlyphs">Current Reading</text>
<text x="121.235" y="1083.4" font-size="33.4" fill="#f4f4f4" textLength="145.847" lengthAdjust="spacingAndGlyphs">x: 0,3151</text>
<text x="121.5" y="1141.4" font-size="33.4" fill="#f4f4f4" textLength="127.019" lengthAdjust="spacingAndGlyphs">y: 0,332</text>
<text x="121.737" y="1198.7" font-size="33.4" fill="#f4f4f4" textLength="156.571" lengthAdjust="spacingAndGlyphs">fL: 144,91</text>
<text x="120.616" y="1256.8" font-size="33.4" fill="#f4f4f4" textLength="226.873" lengthAdjust="spacingAndGlyphs">cd/m²: 496,48</text>
<rect x="563.5" y="979.5" width="414" height="303.7" fill="#e9e9e9"/>
<rect x="573" y="989" width="394.5" height="288.5" fill="#333333"/>
<rect x="627" y="994" width="337" height="243" fill="url(#cieR0)"/>
<mask id="cieK1" maskUnits="userSpaceOnUse" x="627" y="994" width="337" height="243"><rect x="627" y="994" width="337" height="243" fill="url(#cieM1)"/></mask>
<rect x="627" y="994" width="337" height="243" fill="url(#cieR1)" mask="url(#cieK1)"/>
<mask id="cieK2" maskUnits="userSpaceOnUse" x="627" y="994" width="337" height="243"><rect x="627" y="994" width="337" height="243" fill="url(#cieM2)"/></mask>
<rect x="627" y="994" width="337" height="243" fill="url(#cieR2)" mask="url(#cieK2)"/>
<mask id="cieK3" maskUnits="userSpaceOnUse" x="627" y="994" width="337" height="243"><rect x="627" y="994" width="337" height="243" fill="url(#cieM3)"/></mask>
<rect x="627" y="994" width="337" height="243" fill="url(#cieR3)" mask="url(#cieK3)"/>
<mask id="cieK4" maskUnits="userSpaceOnUse" x="627" y="994" width="337" height="243"><rect x="627" y="994" width="337" height="243" fill="url(#cieM4)"/></mask>
<rect x="627" y="994" width="337" height="243" fill="url(#cieR4)" mask="url(#cieK4)"/>
<clipPath id="cieclip"><rect x="627" y="994" width="337" height="243"/></clipPath>
<g clip-path="url(#cieclip)">
<path d="M668.5 1238C681 1227.5 693 1218 706.1 1207.8C725 1193 745 1178.5 765.4 1164.5C788 1148.5 811 1132.5 833.9 1116.5C856 1101 879 1086 902.4 1070.9C922 1058.5 943 1046 966 1032" fill="none" stroke="#050505" stroke-width="3.4"/>
</g>
<rect x="627" y="994" width="337" height="243" fill="none" stroke="#909090" stroke-width="1.8"/>
<line x1="618" y1="1012.6" x2="626" y2="1012.6" stroke="#dcdcdc" stroke-width="1.6" />
<text x="617.5" y="1019.6" font-size="20" fill="#d6d6d6" text-anchor="end">0,35</text>
<line x1="618" y1="1061.2" x2="626" y2="1061.2" stroke="#dcdcdc" stroke-width="1.6" />
<text x="617.5" y="1068.2" font-size="20" fill="#d6d6d6" text-anchor="end">0,34</text>
<line x1="618" y1="1109.8" x2="626" y2="1109.8" stroke="#dcdcdc" stroke-width="1.6" />
<text x="617.5" y="1116.8" font-size="20" fill="#d6d6d6" text-anchor="end">0,33</text>
<line x1="618" y1="1158.4" x2="626" y2="1158.4" stroke="#dcdcdc" stroke-width="1.6" />
<text x="617.5" y="1165.4" font-size="20" fill="#d6d6d6" text-anchor="end">0,32</text>
<line x1="618" y1="1207" x2="626" y2="1207" stroke="#dcdcdc" stroke-width="1.6" />
<text x="617.5" y="1214" font-size="20" fill="#d6d6d6" text-anchor="end">0,31</text>
<line x1="640" y1="1238" x2="640" y2="1245.5" stroke="#dcdcdc" stroke-width="1.8" />
<text x="640" y="1267" font-size="20" fill="#d6d6d6" text-anchor="middle">0,29</text>
<line x1="707.3" y1="1238" x2="707.3" y2="1245.5" stroke="#dcdcdc" stroke-width="1.8" />
<text x="707.3" y="1267" font-size="20" fill="#d6d6d6" text-anchor="middle">0,3</text>
<line x1="774.6" y1="1238" x2="774.6" y2="1245.5" stroke="#dcdcdc" stroke-width="1.8" />
<text x="774.6" y="1267" font-size="20" fill="#d6d6d6" text-anchor="middle">0,31</text>
<line x1="841.9" y1="1238" x2="841.9" y2="1245.5" stroke="#dcdcdc" stroke-width="1.8" />
<text x="841.9" y="1267" font-size="20" fill="#d6d6d6" text-anchor="middle">0,32</text>
<line x1="909.2" y1="1238" x2="909.2" y2="1245.5" stroke="#dcdcdc" stroke-width="1.8" />
<text x="909.2" y="1267" font-size="20" fill="#d6d6d6" text-anchor="middle">0,33</text>
<rect x="784" y="1105" width="18.5" height="18.5" fill="#ffffff" stroke="#000" stroke-width="2"/>
<circle cx="805.5" cy="1124.5" r="5.8" fill="#1c1c1c" stroke="#000" stroke-width="2"/>
<circle cx="809.5" cy="1109.5" r="5.8" fill="#3a3a3a" stroke="#000" stroke-width="2"/>
<circle cx="801.5" cy="1105.5" r="5.8" fill="#5a5a5a" stroke="#000" stroke-width="2"/>
<circle cx="806" cy="1103.5" r="5.8" fill="#777777" stroke="#000" stroke-width="2"/>
<circle cx="815.5" cy="1097.5" r="5.8" fill="#8a8a8a" stroke="#000" stroke-width="2"/>
<circle cx="811" cy="1097.5" r="5.8" fill="#b0b0b0" stroke="#000" stroke-width="2"/>
<circle cx="809" cy="1099" r="5.8" fill="#ffffff" stroke="#000" stroke-width="2"/>
<rect x="987" y="960" width="1234" height="296.6" fill="#000000"/>
<rect x="989" y="962" width="1230" height="40" fill="url(#thead)"/>
<text x="1255.5" y="989.9" font-size="20.4" fill="#f6f6f6" text-anchor="middle">0</text>
<text x="1353" y="989.9" font-size="20.4" fill="#f6f6f6" text-anchor="middle">10</text>
<text x="1444.1" y="989.9" font-size="20.4" fill="#f6f6f6" text-anchor="middle">20</text>
<text x="1535.2" y="989.9" font-size="20.4" fill="#f6f6f6" text-anchor="middle">30</text>
<text x="1626.3" y="989.9" font-size="20.4" fill="#f6f6f6" text-anchor="middle">40</text>
<text x="1717.4" y="989.9" font-size="20.4" fill="#f6f6f6" text-anchor="middle">50</text>
<text x="1808.5" y="989.9" font-size="20.4" fill="#f6f6f6" text-anchor="middle">60</text>
<text x="1899.6" y="989.9" font-size="20.4" fill="#f6f6f6" text-anchor="middle">70</text>
<text x="1990.7" y="989.9" font-size="20.4" fill="#f6f6f6" text-anchor="middle">80</text>
<text x="2081.8" y="989.9" font-size="20.4" fill="#f6f6f6" text-anchor="middle">90</text>
<text x="2172.9" y="989.9" font-size="20.4" fill="#f6f6f6" text-anchor="middle">100</text>
<rect x="989" y="1002" width="1230" height="36.66" fill="url(#rowd)"/>
<text x="1005.5" y="1028.6" font-size="20.6" fill="#f2f2f2" font-weight="bold" textLength="86" lengthAdjust="spacingAndGlyphs">x: CIE31</text>
<text x="1209.5" y="1028.6" font-size="21.8" fill="#f2f2f2" textLength="42.3" lengthAdjust="spacingAndGlyphs">0,25</text>
<text x="1313.5" y="1028.6" font-size="21.8" fill="#f2f2f2" textLength="42.3" lengthAdjust="spacingAndGlyphs">0,31</text>
<text x="1404.68" y="1028.6" font-size="21.8" fill="#f2f2f2" textLength="42.3" lengthAdjust="spacingAndGlyphs">0,31</text>
<text x="1495.86" y="1028.6" font-size="21.8" fill="#f2f2f2" textLength="42.3" lengthAdjust="spacingAndGlyphs">0,32</text>
<text x="1587.04" y="1028.6" font-size="21.8" fill="#f2f2f2" textLength="42.3" lengthAdjust="spacingAndGlyphs">0,31</text>
<text x="1678.22" y="1028.6" font-size="21.8" fill="#f2f2f2" textLength="42.3" lengthAdjust="spacingAndGlyphs">0,32</text>
<text x="1769.4" y="1028.6" font-size="21.8" fill="#f2f2f2" textLength="42.3" lengthAdjust="spacingAndGlyphs">0,31</text>
<text x="1860.58" y="1028.6" font-size="21.8" fill="#f2f2f2" textLength="42.3" lengthAdjust="spacingAndGlyphs">0,31</text>
<text x="1951.76" y="1028.6" font-size="21.8" fill="#f2f2f2" textLength="42.3" lengthAdjust="spacingAndGlyphs">0,31</text>
<text x="2042.94" y="1028.6" font-size="21.8" fill="#f2f2f2" textLength="42.3" lengthAdjust="spacingAndGlyphs">0,32</text>
<text x="2134.12" y="1028.6" font-size="21.8" fill="#f2f2f2" textLength="42.3" lengthAdjust="spacingAndGlyphs">0,32</text>
<rect x="989" y="1038.36" width="1230" height="36.66" fill="url(#rowl)"/>
<text x="1005.5" y="1064.96" font-size="20.6" fill="#efefef" font-weight="bold" textLength="86" lengthAdjust="spacingAndGlyphs">y: CIE31</text>
<text x="1209.5" y="1064.96" font-size="21.8" fill="#efefef" textLength="42.3" lengthAdjust="spacingAndGlyphs">0,25</text>
<text x="1313.5" y="1064.96" font-size="21.8" fill="#efefef" textLength="42.3" lengthAdjust="spacingAndGlyphs">0,33</text>
<text x="1404.68" y="1064.96" font-size="21.8" fill="#efefef" textLength="42.3" lengthAdjust="spacingAndGlyphs">0,33</text>
<text x="1495.86" y="1064.96" font-size="21.8" fill="#efefef" textLength="42.3" lengthAdjust="spacingAndGlyphs">0,33</text>
<text x="1587.04" y="1064.96" font-size="21.8" fill="#efefef" textLength="42.3" lengthAdjust="spacingAndGlyphs">0,33</text>
<text x="1678.22" y="1064.96" font-size="21.8" fill="#efefef" textLength="42.3" lengthAdjust="spacingAndGlyphs">0,33</text>
<text x="1769.4" y="1064.96" font-size="21.8" fill="#efefef" textLength="42.3" lengthAdjust="spacingAndGlyphs">0,33</text>
<text x="1860.58" y="1064.96" font-size="21.8" fill="#efefef" textLength="42.3" lengthAdjust="spacingAndGlyphs">0,33</text>
<text x="1951.76" y="1064.96" font-size="21.8" fill="#efefef" textLength="42.3" lengthAdjust="spacingAndGlyphs">0,33</text>
<text x="2042.94" y="1064.96" font-size="21.8" fill="#efefef" textLength="42.3" lengthAdjust="spacingAndGlyphs">0,33</text>
<text x="2134.12" y="1064.96" font-size="21.8" fill="#efefef" textLength="42.3" lengthAdjust="spacingAndGlyphs">0,33</text>
<rect x="989" y="1074.72" width="1230" height="36.66" fill="url(#rowd)"/>
<text x="1005.5" y="1101.32" font-size="20.6" fill="#f2f2f2" font-weight="bold" textLength="13.5" lengthAdjust="spacingAndGlyphs">Y</text>
<text x="1209.5" y="1101.32" font-size="21.8" fill="#f2f2f2" textLength="42.3" lengthAdjust="spacingAndGlyphs">0,34</text>
<text x="1313.5" y="1101.32" font-size="21.8" fill="#f2f2f2" textLength="42.3" lengthAdjust="spacingAndGlyphs">3,53</text>
<text x="1404.68" y="1101.32" font-size="21.8" fill="#f2f2f2" textLength="54.5" lengthAdjust="spacingAndGlyphs">14,89</text>
<text x="1495.86" y="1101.32" font-size="21.8" fill="#f2f2f2" textLength="54.5" lengthAdjust="spacingAndGlyphs">35,63</text>
<text x="1587.04" y="1101.32" font-size="21.8" fill="#f2f2f2" textLength="54.5" lengthAdjust="spacingAndGlyphs">67,03</text>
<text x="1678.22" y="1101.32" font-size="21.8" fill="#f2f2f2" textLength="66.7" lengthAdjust="spacingAndGlyphs">110,23</text>
<text x="1769.4" y="1101.32" font-size="21.8" fill="#f2f2f2" textLength="66.7" lengthAdjust="spacingAndGlyphs">162,56</text>
<text x="1860.58" y="1101.32" font-size="21.8" fill="#f2f2f2" textLength="66.7" lengthAdjust="spacingAndGlyphs">226,15</text>
<text x="1951.76" y="1101.32" font-size="21.8" fill="#f2f2f2" textLength="66.7" lengthAdjust="spacingAndGlyphs">306,75</text>
<text x="2042.94" y="1101.32" font-size="21.8" fill="#f2f2f2" textLength="66.7" lengthAdjust="spacingAndGlyphs">399,33</text>
<text x="2134.12" y="1101.32" font-size="21.8" fill="#f2f2f2" textLength="66.7" lengthAdjust="spacingAndGlyphs">496,48</text>
<rect x="989" y="1111.08" width="1230" height="36.66" fill="url(#rowl)"/>
<text x="1005.5" y="1137.68" font-size="20.6" fill="#efefef" font-weight="bold" textLength="89.5" lengthAdjust="spacingAndGlyphs">Target Y</text>
<text x="1209.5" y="1137.68" font-size="21.8" fill="#efefef" textLength="42.3" lengthAdjust="spacingAndGlyphs">0,00</text>
<text x="1313.5" y="1137.68" font-size="21.8" fill="#efefef" textLength="42.3" lengthAdjust="spacingAndGlyphs">5,13</text>
<text x="1404.68" y="1137.68" font-size="21.8" fill="#efefef" textLength="54.5" lengthAdjust="spacingAndGlyphs">16,44</text>
<text x="1495.86" y="1137.68" font-size="21.8" fill="#efefef" textLength="54.5" lengthAdjust="spacingAndGlyphs">35,88</text>
<text x="1587.04" y="1137.68" font-size="21.8" fill="#efefef" textLength="54.5" lengthAdjust="spacingAndGlyphs">65,97</text>
<text x="1678.22" y="1137.68" font-size="21.8" fill="#efefef" textLength="66.7" lengthAdjust="spacingAndGlyphs">107,17</text>
<text x="1769.4" y="1137.68" font-size="21.8" fill="#efefef" textLength="66.7" lengthAdjust="spacingAndGlyphs">158,15</text>
<text x="1860.58" y="1137.68" font-size="21.8" fill="#efefef" textLength="66.7" lengthAdjust="spacingAndGlyphs">221,03</text>
<text x="1951.76" y="1137.68" font-size="21.8" fill="#efefef" textLength="66.7" lengthAdjust="spacingAndGlyphs">299,79</text>
<text x="2042.94" y="1137.68" font-size="21.8" fill="#efefef" textLength="66.7" lengthAdjust="spacingAndGlyphs">392,87</text>
<text x="2134.12" y="1137.68" font-size="21.8" fill="#efefef" textLength="66.7" lengthAdjust="spacingAndGlyphs">496,48</text>
<rect x="989" y="1147.44" width="1230" height="36.66" fill="url(#rowd)"/>
<text x="1005.5" y="1174.04" font-size="20.6" fill="#f2f2f2" font-weight="bold" textLength="181" lengthAdjust="spacingAndGlyphs">Gamma Log/Log</text>
<text x="1209.5" y="1174.04" font-size="21.8" fill="#f2f2f2" textLength="42.3" lengthAdjust="spacingAndGlyphs">1,28</text>
<text x="1313.5" y="1174.04" font-size="21.8" fill="#f2f2f2" textLength="42.3" lengthAdjust="spacingAndGlyphs">2,17</text>
<text x="1404.68" y="1174.04" font-size="21.8" fill="#f2f2f2" textLength="42.3" lengthAdjust="spacingAndGlyphs">2,18</text>
<text x="1495.86" y="1174.04" font-size="21.8" fill="#f2f2f2" textLength="42.3" lengthAdjust="spacingAndGlyphs">2,18</text>
<text x="1587.04" y="1174.04" font-size="21.8" fill="#f2f2f2" textLength="42.3" lengthAdjust="spacingAndGlyphs">2,19</text>
<text x="1678.22" y="1174.04" font-size="21.8" fill="#f2f2f2" textLength="42.3" lengthAdjust="spacingAndGlyphs">2,18</text>
<text x="1769.4" y="1174.04" font-size="21.8" fill="#f2f2f2" textLength="42.3" lengthAdjust="spacingAndGlyphs">2,19</text>
<text x="1860.58" y="1174.04" font-size="21.8" fill="#f2f2f2" textLength="42.3" lengthAdjust="spacingAndGlyphs">2,19</text>
<text x="1951.76" y="1174.04" font-size="21.8" fill="#f2f2f2" textLength="42.3" lengthAdjust="spacingAndGlyphs">2,16</text>
<text x="2042.94" y="1174.04" font-size="21.8" fill="#f2f2f2" textLength="42.3" lengthAdjust="spacingAndGlyphs">2,11</text>
<text x="2134.12" y="1174.04" font-size="21.8" fill="#f2f2f2" textLength="42.3" lengthAdjust="spacingAndGlyphs">2,27</text>
<rect x="989" y="1183.8" width="1230" height="36.66" fill="url(#rowl)"/>
<text x="1005.5" y="1210.4" font-size="20.6" fill="#efefef" font-weight="bold" textLength="41" lengthAdjust="spacingAndGlyphs">CCT</text>
<text x="1209.5" y="1210.4" font-size="21.8" fill="#efefef" textLength="91.1" lengthAdjust="spacingAndGlyphs">20647,00</text>
<text x="1313.5" y="1210.4" font-size="21.8" fill="#efefef" textLength="78.9" lengthAdjust="spacingAndGlyphs">6429,00</text>
<text x="1404.68" y="1210.4" font-size="21.8" fill="#efefef" textLength="78.9" lengthAdjust="spacingAndGlyphs">6376,00</text>
<text x="1495.86" y="1210.4" font-size="21.8" fill="#efefef" textLength="78.9" lengthAdjust="spacingAndGlyphs">6315,00</text>
<text x="1587.04" y="1210.4" font-size="21.8" fill="#efefef" textLength="78.9" lengthAdjust="spacingAndGlyphs">6421,00</text>
<text x="1678.22" y="1210.4" font-size="21.8" fill="#efefef" textLength="78.9" lengthAdjust="spacingAndGlyphs">6354,00</text>
<text x="1769.4" y="1210.4" font-size="21.8" fill="#efefef" textLength="78.9" lengthAdjust="spacingAndGlyphs">6386,00</text>
<text x="1860.58" y="1210.4" font-size="21.8" fill="#efefef" textLength="78.9" lengthAdjust="spacingAndGlyphs">6380,00</text>
<text x="1951.76" y="1210.4" font-size="21.8" fill="#efefef" textLength="78.9" lengthAdjust="spacingAndGlyphs">6374,00</text>
<text x="2042.94" y="1210.4" font-size="21.8" fill="#efefef" textLength="78.9" lengthAdjust="spacingAndGlyphs">6356,00</text>
<text x="2134.12" y="1210.4" font-size="21.8" fill="#efefef" textLength="78.9" lengthAdjust="spacingAndGlyphs">6355,00</text>
<rect x="989" y="1220.16" width="1230" height="36.66" fill="url(#rowd)"/>
<text x="1005.5" y="1246.76" font-size="20.6" fill="#f2f2f2" font-weight="bold" textLength="89" lengthAdjust="spacingAndGlyphs">ΔE 2000</text>
<text x="1209.5" y="1246.76" font-size="21.8" fill="#f2f2f2" textLength="42.3" lengthAdjust="spacingAndGlyphs">0,94</text>
<text x="1313.5" y="1246.76" font-size="21.8" fill="#f2f2f2" textLength="42.3" lengthAdjust="spacingAndGlyphs">1,81</text>
<text x="1404.68" y="1246.76" font-size="21.8" fill="#f2f2f2" textLength="42.3" lengthAdjust="spacingAndGlyphs">0,93</text>
<text x="1495.86" y="1246.76" font-size="21.8" fill="#f2f2f2" textLength="42.3" lengthAdjust="spacingAndGlyphs">0,81</text>
<text x="1587.04" y="1246.76" font-size="21.8" fill="#f2f2f2" textLength="42.3" lengthAdjust="spacingAndGlyphs">0,63</text>
<text x="1678.22" y="1246.76" font-size="21.8" fill="#f2f2f2" textLength="42.3" lengthAdjust="spacingAndGlyphs">1,19</text>
<text x="1769.4" y="1246.76" font-size="21.8" fill="#f2f2f2" textLength="42.3" lengthAdjust="spacingAndGlyphs">1,01</text>
<text x="1860.58" y="1246.76" font-size="21.8" fill="#f2f2f2" textLength="42.3" lengthAdjust="spacingAndGlyphs">1,19</text>
<text x="1951.76" y="1246.76" font-size="21.8" fill="#f2f2f2" textLength="42.3" lengthAdjust="spacingAndGlyphs">1,72</text>
<text x="2042.94" y="1246.76" font-size="21.8" fill="#f2f2f2" textLength="42.3" lengthAdjust="spacingAndGlyphs">1,83</text>
<text x="2134.12" y="1246.76" font-size="21.8" fill="#f2f2f2" textLength="42.3" lengthAdjust="spacingAndGlyphs">1,60</text>
<path d="M988 1257V961H2220V1257" fill="none" stroke="#050505" stroke-width="2"/>
<rect x="2.5" y="1287" width="184.5" height="91" fill="url(#lvb)" rx="6" stroke="#8a8a8a" stroke-width="1"/>
<rect x="9" y="1294.6" width="170.5" height="53.6" fill="#000000" rx="5" stroke="#5c5c5c" stroke-width="1.2"/>
<path d="M10.5 1299a4 4 0 0 1 4-4H174a4 4 0 0 1 4 4" fill="none" stroke="#000" stroke-width="1.4" opacity="0.28"/>
<path d="M10.5 1343.5a4 4 0 0 0 4 4H174a4 4 0 0 0 4-4" fill="none" stroke="#fff" stroke-width="1.2" opacity="0.22"/>
<text x="94" y="1371.6" font-size="15.4" fill="#2e2e2e" text-anchor="middle" font-weight="bold">0</text>
<rect x="190.85" y="1287" width="184.5" height="91" fill="url(#lvb)" rx="6" stroke="#8a8a8a" stroke-width="1"/>
<rect x="197.35" y="1294.6" width="170.5" height="53.6" fill="#1a1a1a" rx="5" stroke="#5c5c5c" stroke-width="1.2"/>
<path d="M198.85 1299a4 4 0 0 1 4-4H362.35a4 4 0 0 1 4 4" fill="none" stroke="#000" stroke-width="1.4" opacity="0.28"/>
<path d="M198.85 1343.5a4 4 0 0 0 4 4H362.35a4 4 0 0 0 4-4" fill="none" stroke="#fff" stroke-width="1.2" opacity="0.22"/>
<text x="282.35" y="1371.6" font-size="15.4" fill="#2e2e2e" text-anchor="middle" font-weight="bold">10</text>
<rect x="379.2" y="1287" width="184.5" height="91" fill="url(#lvb)" rx="6" stroke="#8a8a8a" stroke-width="1"/>
<rect x="385.7" y="1294.6" width="170.5" height="53.6" fill="#333333" rx="5" stroke="#5c5c5c" stroke-width="1.2"/>
<path d="M387.2 1299a4 4 0 0 1 4-4H550.7a4 4 0 0 1 4 4" fill="none" stroke="#000" stroke-width="1.4" opacity="0.28"/>
<path d="M387.2 1343.5a4 4 0 0 0 4 4H550.7a4 4 0 0 0 4-4" fill="none" stroke="#fff" stroke-width="1.2" opacity="0.22"/>
<text x="470.7" y="1371.6" font-size="15.4" fill="#2e2e2e" text-anchor="middle" font-weight="bold">20</text>
<rect x="567.55" y="1287" width="184.5" height="91" fill="url(#lvb)" rx="6" stroke="#8a8a8a" stroke-width="1"/>
<rect x="574.05" y="1294.6" width="170.5" height="53.6" fill="#4c4c4c" rx="5" stroke="#5c5c5c" stroke-width="1.2"/>
<path d="M575.55 1299a4 4 0 0 1 4-4H739.05a4 4 0 0 1 4 4" fill="none" stroke="#000" stroke-width="1.4" opacity="0.28"/>
<path d="M575.55 1343.5a4 4 0 0 0 4 4H739.05a4 4 0 0 0 4-4" fill="none" stroke="#fff" stroke-width="1.2" opacity="0.22"/>
<text x="659.05" y="1371.6" font-size="15.4" fill="#2e2e2e" text-anchor="middle" font-weight="bold">30</text>
<rect x="755.9" y="1287" width="184.5" height="91" fill="url(#lvb)" rx="6" stroke="#8a8a8a" stroke-width="1"/>
<rect x="762.4" y="1294.6" width="170.5" height="53.6" fill="#666666" rx="5" stroke="#5c5c5c" stroke-width="1.2"/>
<path d="M763.9 1299a4 4 0 0 1 4-4H927.4a4 4 0 0 1 4 4" fill="none" stroke="#000" stroke-width="1.4" opacity="0.28"/>
<path d="M763.9 1343.5a4 4 0 0 0 4 4H927.4a4 4 0 0 0 4-4" fill="none" stroke="#fff" stroke-width="1.2" opacity="0.22"/>
<text x="847.4" y="1371.6" font-size="15.4" fill="#2e2e2e" text-anchor="middle" font-weight="bold">40</text>
<rect x="944.25" y="1287" width="184.5" height="91" fill="url(#lvb)" rx="6" stroke="#8a8a8a" stroke-width="1"/>
<rect x="950.75" y="1294.6" width="170.5" height="53.6" fill="#7f7f7f" rx="5" stroke="#5c5c5c" stroke-width="1.2"/>
<path d="M952.25 1299a4 4 0 0 1 4-4H1115.75a4 4 0 0 1 4 4" fill="none" stroke="#000" stroke-width="1.4" opacity="0.28"/>
<path d="M952.25 1343.5a4 4 0 0 0 4 4H1115.75a4 4 0 0 0 4-4" fill="none" stroke="#fff" stroke-width="1.2" opacity="0.22"/>
<text x="1035.75" y="1371.6" font-size="15.4" fill="#2e2e2e" text-anchor="middle" font-weight="bold">50</text>
<rect x="1132.6" y="1287" width="184.5" height="91" fill="url(#lvb)" rx="6" stroke="#8a8a8a" stroke-width="1"/>
<rect x="1139.1" y="1294.6" width="170.5" height="53.6" fill="#999999" rx="5" stroke="#5c5c5c" stroke-width="1.2"/>
<path d="M1140.6 1299a4 4 0 0 1 4-4H1304.1a4 4 0 0 1 4 4" fill="none" stroke="#000" stroke-width="1.4" opacity="0.28"/>
<path d="M1140.6 1343.5a4 4 0 0 0 4 4H1304.1a4 4 0 0 0 4-4" fill="none" stroke="#fff" stroke-width="1.2" opacity="0.22"/>
<text x="1224.1" y="1371.6" font-size="15.4" fill="#2e2e2e" text-anchor="middle" font-weight="bold">60</text>
<rect x="1320.95" y="1287" width="184.5" height="91" fill="url(#lvb)" rx="6" stroke="#8a8a8a" stroke-width="1"/>
<rect x="1327.45" y="1294.6" width="170.5" height="53.6" fill="#b2b2b2" rx="5" stroke="#5c5c5c" stroke-width="1.2"/>
<path d="M1328.95 1299a4 4 0 0 1 4-4H1492.45a4 4 0 0 1 4 4" fill="none" stroke="#000" stroke-width="1.4" opacity="0.28"/>
<path d="M1328.95 1343.5a4 4 0 0 0 4 4H1492.45a4 4 0 0 0 4-4" fill="none" stroke="#fff" stroke-width="1.2" opacity="0.22"/>
<text x="1412.45" y="1371.6" font-size="15.4" fill="#2e2e2e" text-anchor="middle" font-weight="bold">70</text>
<rect x="1509.3" y="1287" width="184.5" height="91" fill="url(#lvb)" rx="6" stroke="#8a8a8a" stroke-width="1"/>
<rect x="1515.8" y="1294.6" width="170.5" height="53.6" fill="#cccccc" rx="5" stroke="#5c5c5c" stroke-width="1.2"/>
<path d="M1517.3 1299a4 4 0 0 1 4-4H1680.8a4 4 0 0 1 4 4" fill="none" stroke="#000" stroke-width="1.4" opacity="0.28"/>
<path d="M1517.3 1343.5a4 4 0 0 0 4 4H1680.8a4 4 0 0 0 4-4" fill="none" stroke="#fff" stroke-width="1.2" opacity="0.22"/>
<text x="1600.8" y="1371.6" font-size="15.4" fill="#2e2e2e" text-anchor="middle" font-weight="bold">80</text>
<rect x="1697.65" y="1287" width="184.5" height="91" fill="url(#lvb)" rx="6" stroke="#8a8a8a" stroke-width="1"/>
<rect x="1704.15" y="1294.6" width="170.5" height="53.6" fill="#e5e5e5" rx="5" stroke="#5c5c5c" stroke-width="1.2"/>
<path d="M1705.65 1299a4 4 0 0 1 4-4H1869.15a4 4 0 0 1 4 4" fill="none" stroke="#000" stroke-width="1.4" opacity="0.28"/>
<path d="M1705.65 1343.5a4 4 0 0 0 4 4H1869.15a4 4 0 0 0 4-4" fill="none" stroke="#fff" stroke-width="1.2" opacity="0.22"/>
<text x="1789.15" y="1371.6" font-size="15.4" fill="#2e2e2e" text-anchor="middle" font-weight="bold">90</text>
<rect x="1886" y="1287" width="184.5" height="91" fill="url(#lvsel)" rx="6"/>
<rect x="1892.5" y="1294.6" width="170.5" height="53.6" fill="#ffffff" rx="5" stroke="#1a1a1a" stroke-width="1.2"/>
<text x="1977.5" y="1371.6" font-size="15.4" fill="#ffffff" text-anchor="middle" font-weight="bold">100</text>
<rect x="2075.5" y="1287" width="72.5" height="91" fill="url(#ctl)" rx="6"/>
<line x1="2076" y1="1314.6" x2="2148" y2="1314.6" stroke="#4a4a4a" stroke-width="1.4" />
<line x1="2076" y1="1316" x2="2148" y2="1316" stroke="#9c9c9c" stroke-width="1" />
<circle cx="2111.4" cy="1300" r="11" fill="url(#cir)"/>
<path d="M2104.5 1303.5L2111.5 1296L2118.5 1303.5Z" fill="#333"/>
<rect x="2090" y="1325.3" width="42.5" height="42.5" fill="url(#stp)" rx="5" stroke="#2c2c2c" stroke-width="3.6"/>
<rect x="2101.2" y="1336.7" width="20.6" height="20.2" fill="#050505"/>
<rect x="2149.2" y="1287" width="69.1" height="45" fill="url(#ctl2)"/>
<circle cx="2183.25" cy="1310" r="15" fill="url(#cir)"/>
<rect x="2218.3" y="1287" width="67.7" height="45" fill="url(#ctl2)"/>
<line x1="2218.3" y1="1287" x2="2218.3" y2="1332" stroke="#262626" stroke-width="1.5" />
<circle cx="2251.65" cy="1310" r="15" fill="url(#cir)"/>
<rect x="2286" y="1287" width="67.2" height="45" fill="url(#ctl2)"/>
<line x1="2286" y1="1287" x2="2286" y2="1332" stroke="#262626" stroke-width="1.5" />
<circle cx="2319.1" cy="1310" r="15" fill="url(#cir)"/>
<rect x="2353.2" y="1287" width="67.4" height="45" fill="url(#ctl2)"/>
<line x1="2353.2" y1="1287" x2="2353.2" y2="1332" stroke="#262626" stroke-width="1.5" />
<circle cx="2386.4" cy="1310" r="15" fill="url(#cir)"/>
<rect x="2420.6" y="1287" width="67.6" height="45" fill="url(#ctl2)"/>
<line x1="2420.6" y1="1287" x2="2420.6" y2="1332" stroke="#262626" stroke-width="1.5" />
<circle cx="2453.9" cy="1310" r="15" fill="url(#cir)"/>
<rect x="2488.2" y="1287" width="61" height="45" fill="#2b2b2b"/>
<circle cx="2522" cy="1309.5" r="15.5" fill="url(#dk)"/>
<rect x="2177.2" y="1304" width="11.8" height="12" fill="#333333"/>
<path d="M2246.5 1302.5L2259.5 1310L2246.5 1317.5Z" fill="#333333"/>
<path d="M2315.8 1302.5H2312V1317.5H2315.8M2323.8 1302.5H2327.6V1317.5H2323.8" fill="none" stroke="#333333" stroke-width="3"/>
<path d="M2316.6 1309.6H2319.2M2320.6 1309.6H2323.2" fill="none" stroke="#333333" stroke-width="2.6"/>
<path d="M2386.8 1310.3C2389.8 1304.7 2397.0 1304.7 2397.0 1310.3C2397.0 1315.8999999999999 2389.8 1315.8999999999999 2386.8 1310.3C2383.8 1304.7 2376.6000000000004 1304.7 2376.6000000000004 1310.3C2376.6000000000004 1315.8999999999999 2383.8 1315.8999999999999 2386.8 1310.3Z" fill="none" stroke="#333333" stroke-width="2.7"/>
<path d="M2447 1309a8 8 0 0 1 13.5-5.2M2463 1311a8 8 0 0 1-13.5 5.2" fill="none" stroke="#333333" stroke-width="3.5"/>
<path d="M2462.5 1299.5V1306.5H2455.5Z" fill="#333333"/>
<path d="M2447.5 1320.5V1313.5H2454.5Z" fill="#333333"/>
<rect x="2149.2" y="1334" width="204" height="44.2" fill="url(#ctl2)"/>
<rect x="2353.2" y="1334" width="200" height="44.2" fill="url(#ctl2)"/>
<path d="M2149.2 1334H2549" fill="none" stroke="#b8b8b8" stroke-width="1.2"/>
<line x1="2149.2" y1="1333" x2="2549" y2="1333" stroke="#3e3e3e" stroke-width="1.6" />
<line x1="2353.2" y1="1334" x2="2353.2" y2="1378.2" stroke="#262626" stroke-width="1.5" />
<circle cx="2195.2" cy="1356.3" r="14" fill="url(#cir)"/>
<circle cx="2514.6" cy="1356.3" r="14" fill="url(#cir)"/>
<path d="M2194 1349L2188.5 1356.3L2194 1363.5M2201 1349L2195.5 1356.3L2201 1363.5" fill="none" stroke="#333333" stroke-width="2.2"/>
<path d="M2509 1349L2514.5 1356.3L2509 1363.5M2516 1349L2521.5 1356.3L2516 1363.5" fill="none" stroke="#333333" stroke-width="2.2"/>
<text x="2233.1" y="1368.2" font-size="32.5" fill="#343434" textLength="77.9268" lengthAdjust="spacingAndGlyphs" stroke="#343434" stroke-width="0.7">Back</text>
<text x="2393.03" y="1368.2" font-size="32.5" fill="#343434" textLength="79.461" lengthAdjust="spacingAndGlyphs" stroke="#343434" stroke-width="0.7">Next</text>
</svg>
</body></html>
